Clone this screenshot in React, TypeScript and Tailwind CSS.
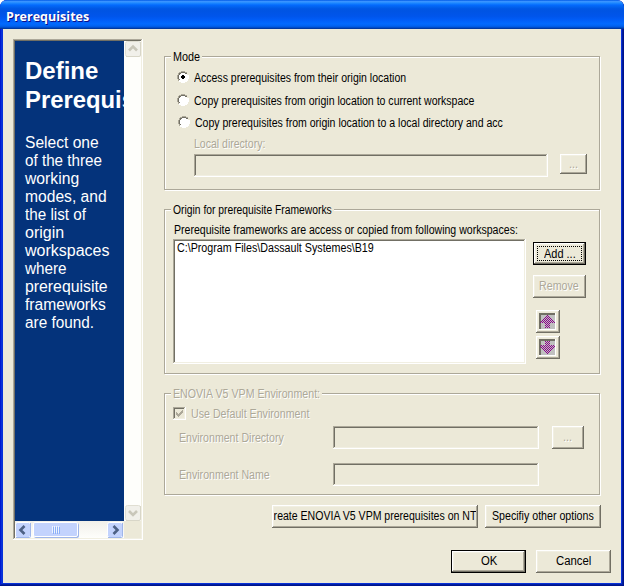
import { useLayoutEffect, useRef, useState } from "react";
import type { ReactNode } from "react";

// Text squeezed horizontally to an exact width, like the narrow system bitmap face.
function Fit({ w, children, className = "" }: { w: number; children: ReactNode; className?: string }) {
  const ref = useRef<HTMLSpanElement>(null);
  const [scale, setScale] = useState(1);
  useLayoutEffect(() => {
    if (ref.current) setScale(w / ref.current.offsetWidth);
  }, [w]);
  return (
    <span className={`block shrink-0 ${className}`} style={{ width: w }}>
      <span ref={ref} className="inline-block origin-left whitespace-pre" style={{ transform: `scaleX(${scale})` }}>
        {children}
      </span>
    </span>
  );
}

const disabled = "text-[#aca899] [text-shadow:1px_1px_0_#fff]";
const raised =
  "shrink-0 overflow-hidden bg-[#ece9d8] shadow-[inset_-1px_-1px_0_#716f64,inset_1px_1px_0_#fff,inset_-2px_-2px_0_#aca899,inset_2px_2px_0_#f1efe2]";
const raisedDefault =
  "shrink-0 overflow-hidden bg-[#ece9d8] border border-black shadow-[inset_-1px_-1px_0_#716f64,inset_1px_1px_0_#fff,inset_-2px_-2px_0_#aca899,inset_2px_2px_0_#f1efe2]";
const sunken =
  "shrink-0 shadow-[inset_-1px_-1px_0_#fff,inset_1px_1px_0_#aca899,inset_-2px_-2px_0_#f1efe2,inset_2px_2px_0_#716f64]";

function Group({ title, w, className, off, children }: { title: string; w: number; className: string; off?: boolean; children: ReactNode }) {
  return (
    <section className={`w-[436px] shrink-0 border border-[#aca899] shadow-[1px_1px_0_#fff,inset_1px_1px_0_#fff] ${className}`}>
      <div className={`ml-[6px] flex h-[14px] w-fit bg-[#ece9d8] pr-[2px] pl-[2px] ${off ? disabled : ""}`}>
        <Fit w={w}>{title}</Fit>
      </div>
      {children}
    </section>
  );
}

function Radio({ checked }: { checked?: boolean }) {
  return (
    <svg className="shrink-0" width="12" height="12" viewBox="0 0 12 12" shapeRendering="crispEdges">
      <path d="M4 1h4v1h2v2h1v4h-1v2H8v1H4v-1H2V8H1V4h1V2h2z" fill="#fff" />
      <path d="M4 0h4v1H4zM2 1h2v1H2zM8 1h2v1H8zM1 2h1v2H1zM0 4h1v4H0zM1 8h1v2H1z" fill="#aca899" />
      <path d="M4 1h4v1H4zM2 2h2v1H2zM8 2h2v1H8zM2 3h1v1H2zM1 4h1v4H1zM2 8h1v1H2z" fill="#716f64" />
      <path d="M11 4h1v4h-1zM10 8h1v2h-1zM8 10h2v1H8zM4 11h4v1H4zM2 10h2v1H2z" fill="#fff" />
      {checked && <path d="M5 4h2v1h1v2H7v1H5V7H4V5h1z" fill="#000" />}
    </svg>
  );
}

function Option({ label, w, className, checked }: { label: string; w: number; className: string; checked?: boolean }) {
  return (
    <div className={`flex h-[14px] ${className}`}>
      <Radio checked={checked} />
      <Fit w={w} className="ml-[5px]">{label}</Fit>
    </div>
  );
}

// Dithered arrows: every second pixel of each row is coloured.
function Arrow({ down }: { down?: boolean }) {
  const halfWidths = down ? [2, 2, 2, 2, 7, 7, 6, 5, 4, 3, 2, 1, 0] : [0, 1, 2, 3, 4, 5, 6, 7, 2, 2, 2, 2, 2];
  const cells: string[] = [];
  halfWidths.forEach((h, i) => {
    const y = i + 2;
    for (let x = 8 - h; x <= 8 + h; x++) if ((x + y) % 2 === 0) cells.push(`M${x} ${y}h1v1h-1z`);
  });
  return (
    <div className={`h-[23px] w-[24px] pt-[3px] pl-[3px] ${raised}`}>
      <svg className="block" width="17" height="17" viewBox="0 0 17 17" shapeRendering="crispEdges">
        <rect width="17" height="17" fill="#fff" />
        <rect width="16" height="16" fill="#716f64" />
        <rect x="2" y="2" width="14" height="14" fill="#c0c0c0" />
        <path d={cells.join("")} fill="#8b008b" />
      </svg>
    </div>
  );
}

type Dir = "up" | "down" | "left" | "right";
const chevrons: Record<Dir, string> = {
  up: "M4 9.5 8 5.5 12 9.5",
  down: "M4 6 8 10 12 6",
  left: "M9.5 4 5.5 8 9.5 12",
  right: "M6.5 4 10.5 8 6.5 12",
};
function ScrollButton({ dir, off }: { dir: Dir; off?: boolean }) {
  return (
    <svg className="shrink-0" width="16" height="16" viewBox="0 0 16 16">
      <rect x="0.5" y="0.5" width="15" height="15" rx="2" fill={off ? "#f1f0ea" : "#c3d3fd"} stroke={off ? "#e0ded2" : "#fff"} />
      <path d="M1 15.5h13.5q1 0 1-1V1" fill="none" stroke={off ? "#d8d6c8" : "#9fb6ea"} />
      <path d={chevrons[dir]} fill="none" stroke={off ? "#c9c7ba" : "#4d6185"} strokeWidth="2.6" />
    </svg>
  );
}

function SidePanel() {
  return (
    <aside className={`flex h-[501px] w-[130px] flex-col p-[2px] ${sunken}`}>
      <div className="flex h-[480px]">
        <div className="w-[109px] overflow-hidden bg-[#04337b] pl-[10px] text-white">
          <h1 className="mt-[15px] text-[24px] leading-[29px] font-bold">
            <Fit w={73}>Define</Fit>
            <Fit w={151}>Prerequisites</Fit>
          </h1>
          <p className="mt-[20px] text-[16px] leading-[18px]">
            <Fit w={74}>Select one</Fit>
            <Fit w={77}>of the three</Fit>
            <Fit w={54}>working</Fit>
            <Fit w={82}>modes, and</Fit>
            <Fit w={61}>the list of</Fit>
            <Fit w={39}>origin</Fit>
            <Fit w={84}>workspaces</Fit>
            <Fit w={42}>where</Fit>
            <Fit w={83}>prerequisite</Fit>
            <Fit w={81}>frameworks</Fit>
            <Fit w={69}>are found.</Fit>
          </p>
        </div>
        <div className="flex w-[17px] flex-col items-center justify-between bg-[#fefefb]">
          <ScrollButton dir="up" off />
          <ScrollButton dir="down" off />
        </div>
      </div>
      <div className="flex h-[17px] w-[109px] items-center bg-gradient-to-b from-[#f1f0ea] to-[#fefefb] pr-px">
        <ScrollButton dir="left" />
        <div className="ml-[2px] flex h-[15px] w-[45px] items-center justify-center gap-px rounded-[2px] border border-white bg-[#c3d3fd] shadow-[1px_1px_0_#9fb6ea]">
          <i className="h-[7px] w-px bg-[#eef4fe] shadow-[1px_1px_0_#8cb0f8]" />
          <i className="h-[7px] w-px bg-[#eef4fe] shadow-[1px_1px_0_#8cb0f8]" />
          <i className="h-[7px] w-px bg-[#eef4fe] shadow-[1px_1px_0_#8cb0f8]" />
          <i className="h-[7px] w-px bg-[#eef4fe] shadow-[1px_1px_0_#8cb0f8]" />
        </div>
        <div className="flex-1" />
        <ScrollButton dir="right" />
      </div>
    </aside>
  );
}

export default function App() {
  return (
    <div className="h-[586px] w-[624px] overflow-hidden bg-white">
      <div className="flex h-full flex-col overflow-hidden rounded-t-[7px] bg-[#0831d9] font-['Liberation_Sans',Arial,sans-serif] text-[12px] leading-[14px] text-black shadow-[inset_-1px_-1px_0_#00138c,inset_1px_0_0_#0019cf,inset_-2px_-2px_0_#001ea0]">
        <header className="h-[29px] shrink-0 bg-[linear-gradient(#0058e6_0%,#3a93ff_5%,#288eff_9%,#127dff_13%,#0369fc_18%,#0262ee_24%,#0057e5_30%,#0054e3_38%,#0055eb_56%,#005bf5_66%,#026afe_82%,#0062ef_90%,#0052d6_94%,#0040ab_97%,#003092_100%)] pt-[8px] pl-[6px] font-['Open_Sans',sans-serif] text-[13px] leading-[16px] font-bold text-white [text-shadow:1px_1px_0_#0f1089]">
          <Fit w={83}>Prerequisites</Fit>
        </header>
        <main className="mx-[3px] mb-[3px] flex flex-1 flex-col bg-[#ece9d8]">
          <div className="flex pt-[10px] pl-[10px]">
            <SidePanel />
            <div className="ml-[21px] flex flex-col pt-[17px]">
              <Group title="Mode" w={27} className="h-[134px] *:first:mt-[-7px]">
                <Option checked label="Access prerequisites from their origin location" w={212} className="mt-[7px] ml-[12px]" />
                <Option label="Copy prerequisites from origin location to current workspace" w={280} className="mt-[9px] ml-[12px]" />
                <Option label="Copy prerequisites from origin location to a local directory and acc" w={308} className="mt-[8px] ml-[13px]" />
                <Fit w={71} className={`mt-[7px] ml-[29px] ${disabled}`}>Local directory:</Fit>
                <div className="mt-[3px] ml-[29px] flex gap-[12px]">
                  <div className={`h-[23px] w-[354px] ${sunken}`} />
                  <div className={`h-[20px] w-[27px] pt-[3px] pl-[9px] ${raised} ${disabled}`}><Fit w={9}>...</Fit></div>
                </div>
              </Group>

              <Group title="Origin for prerequisite Frameworks" w={159} className="mt-[19px] h-[165px] *:first:mt-[-7px]">
                <Fit w={344} className="mt-[6px] ml-[9px]">Prerequisite frameworks are access or copied from following workspaces:</Fit>
                <div className="mt-[2px] ml-[8px] flex">
                  <div className={`h-[125px] w-[353px] bg-white pt-[2px] pl-[4px] ${sunken}`}>
                    <Fit w={197}>C:\Program Files\Dassault Systemes\B19</Fit>
                  </div>
                  <div className="ml-[7px] pt-[3px]">
                    <div className={`h-[23px] w-[53px] p-[3px] ${raisedDefault}`}>
                      <div className="h-[15px] w-[45px] border border-dotted border-black pl-[6px]">
                        <Fit w={32}>Add ...</Fit>
                      </div>
                    </div>
                    <div className={`mt-[10px] h-[23px] w-[53px] pt-[4px] pl-[6px] ${raised} ${disabled}`}><Fit w={40}>Remove</Fit></div>
                    <div className="mt-[12px] ml-[3px] flex flex-col gap-[3px]">
                      <Arrow />
                      <Arrow down />
                    </div>
                  </div>
                </div>
              </Group>

              <Group off title="ENOVIA V5 VPM Environment:" w={147} className="mt-[19px] h-[102px] *:first:mt-[-7px]">
                <div className="mt-[6px] ml-[8px] flex h-[14px]">
                  <div className={`h-[13px] w-[13px] ${sunken}`}>
                    <svg width="13" height="13" viewBox="0 0 13 13" shapeRendering="crispEdges">
                      <path d="M3 5v3h1v1h1v1h1V9h1V8h1V7h1V6h1V3H9v1H8v1H7v1H6v1H5V6H4V5z" fill="#aca899" />
                    </svg>
                  </div>
                  <Fit w={118} className={`ml-[5px] ${disabled}`}>Use Default Environment</Fit>
                </div>
                <div className="mt-[5px] ml-[14px] flex">
                  <Fit w={105} className={`mt-[5px] ${disabled}`}>Environment Directory</Fit>
                  <div className={`ml-[49px] h-[23px] w-[206px] ${sunken}`} />
                  <div className={`ml-[13px] h-[23px] w-[32px] pt-[4px] pl-[11px] ${raised} ${disabled}`}><Fit w={9}>...</Fit></div>
                </div>
                <div className="mt-[14px] ml-[14px] flex">
                  <Fit w={91} className={`mt-[5px] ${disabled}`}>Environment Name</Fit>
                  <div className={`ml-[63px] h-[23px] w-[206px] ${sunken}`} />
                </div>
              </Group>

              <div className="mt-[10px] ml-[108px] flex gap-[7px]">
                <div className={`flex h-[23px] w-[206px] px-[2px] pt-[4px] ${raised}`}>
                  <div className="flex w-[202px] justify-end overflow-hidden"><Fit w={210}>Create ENOVIA V5 VPM prerequisites on NT</Fit></div>
                </div>
                <div className={`h-[23px] w-[116px] pt-[4px] pl-[7px] ${raised}`}><Fit w={102}>Specifiy other options</Fit></div>
              </div>
            </div>
          </div>
          <footer className="mt-[10px] flex justify-end gap-[10px] pr-[10px]">
            <div className={`h-[23px] w-[75px] pt-[3px] pl-[29px] ${raisedDefault}`}><Fit w={16}>OK</Fit></div>
            <div className={`h-[23px] w-[75px] pt-[4px] pl-[20px] ${raised}`}><Fit w={35}>Cancel</Fit></div>
          </footer>
        </main>
      </div>
    </div>
  );
}
